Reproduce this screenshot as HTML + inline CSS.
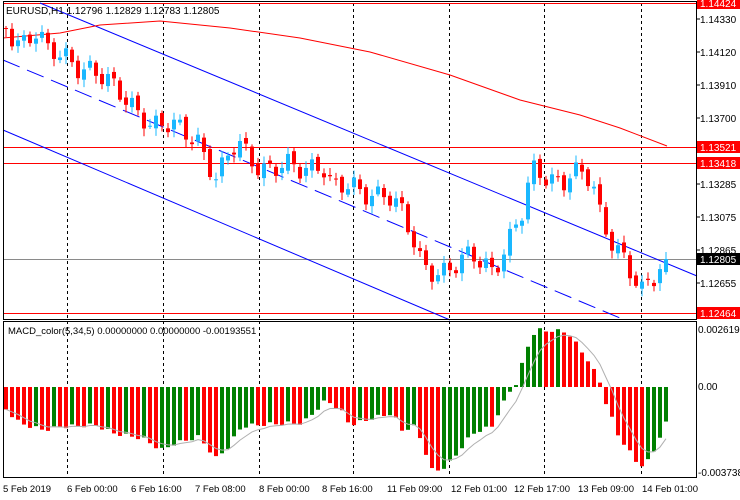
<!DOCTYPE html>
<html><head><meta charset="utf-8"><style>
body{margin:0;background:#fff;width:740px;height:500px;overflow:hidden}
svg{display:block;font-family:"Liberation Sans",sans-serif}
</style></head><body>
<svg id="s" width="740" height="500" xmlns="http://www.w3.org/2000/svg">
<rect x="0" y="0" width="740" height="500" fill="#fff"/>
<g id="grid" stroke="#000" stroke-dasharray="3,3" stroke-width="1"></g>
<g id="main"></g>
<g id="macd"></g>
<rect x="3.5" y="1.5" width="693" height="318" fill="none" stroke="#000"/>
<rect x="3.5" y="321.5" width="693" height="156" fill="none" stroke="#000"/>
<g font-size="10" fill="#000">
<text x="6" y="14">EURUSD,H1  1.12796 1.12829 1.12783 1.12805</text>
<text x="8" y="334" font-size="9.5">MACD_color(5,34,5) 0.00000000 0.00000000 -0.00193551</text>
<text x="700" y="23">1.14330</text><text x="700" y="56">1.14120</text><text x="700" y="89">1.13910</text>
<text x="700" y="122">1.13700</text><text x="700" y="188">1.13285</text><text x="700" y="221">1.13075</text>
<text x="700" y="254">1.12865</text><text x="700" y="287">1.12655</text>
<text x="698" y="333">0.0026195</text><text x="698" y="390">0.00</text><text x="698" y="476">-0.003738</text>
<g font-size="9.5"><text x="3" y="492">5 Feb 2019</text><text x="67" y="492">6 Feb 00:00</text><text x="131" y="492">6 Feb 16:00</text>
<text x="195" y="492">7 Feb 08:00</text><text x="259" y="492">8 Feb 00:00</text><text x="322" y="492">8 Feb 16:00</text>
<text x="387" y="492">11 Feb 09:00</text><text x="451" y="492">12 Feb 01:00</text><text x="514" y="492">12 Feb 17:00</text>
<text x="578" y="492">13 Feb 09:00</text><text x="642" y="492">14 Feb 01:00</text></g>
</g>
<g stroke="#000"><line x1="697" y1="19" x2="700" y2="19"/><line x1="697" y1="52" x2="700" y2="52"/><line x1="697" y1="85" x2="700" y2="85"/><line x1="697" y1="118" x2="700" y2="118"/><line x1="697" y1="184" x2="700" y2="184"/><line x1="697" y1="217" x2="700" y2="217"/><line x1="697" y1="250" x2="700" y2="250"/><line x1="697" y1="283" x2="700" y2="283"/></g>
<g font-size="10" fill="#fff">
<rect x="697" y="-2" width="43" height="11" fill="#f00"/><text x="700" y="7">1.14424</text>
<rect x="697" y="141" width="43" height="12" fill="#f00"/><text x="700" y="151">1.13521</text>
<rect x="697" y="157" width="43" height="12" fill="#f00"/><text x="700" y="167">1.13418</text>
<rect x="697" y="253" width="43" height="12" fill="#000"/><text x="700" y="263">1.12805</text>
<rect x="697" y="307" width="43" height="12" fill="#f00"/><text x="700" y="317">1.12464</text>
</g>
</svg>
<script>
(function(){
var NS="http://www.w3.org/2000/svg";
function el(p,t,a){var e=document.createElementNS(NS,t);for(var k in a)e.setAttribute(k,a[k]);p.appendChild(e);return e;}
var G=document.getElementById('grid'),M=document.getElementById('main'),D=document.getElementById('macd');
[67,163,259,353,449,544,641].forEach(function(x){el(G,'line',{x1:x+.5,y1:3,x2:x+.5,y2:477});});
[[3.5,'#f00'],[147.5,'#f00'],[163.5,'#f00'],[313.5,'#f00'],[259.5,'#8a8a8a']].forEach(function(h){el(M,'line',{x1:4,y1:h[0],x2:697,y2:h[0],stroke:h[1]});});
el(M,'line',{x1:40,y1:3,x2:697,y2:276,stroke:'#00f'});
el(M,'line',{x1:3,y1:130,x2:450,y2:320,stroke:'#00f'});
el(M,'line',{x1:3,y1:60,x2:620,y2:318,stroke:'#00f','stroke-dasharray':'18,8'});
el(M,'polyline',{points:'3,38 60,33 100,25 160,21 230,28 300,38 370,52 450,75 520,100 580,115 620,128 667,146',fill:'none',stroke:'#f00'});
function interp(P,x){for(var i=1;i<P.length;i++){if(x<=P[i][0]){var a=P[i-1],b=P[i],t=(x-a[0])/(b[0]-a[0]);return a[1]+t*(b[1]-a[1]);}}return P[P.length-1][1];}
var K=[[3,28],[20,40],[35,30],[45,55],[65,58],[90,68],[110,90],[140,110],[150,125],[195,135],[215,180],[235,145],[260,165],[300,172],[320,158],[330,185],[360,195],[385,188],[400,215],[420,268],[440,268],[470,260],[490,268],[500,250],[520,215],[530,175],[560,178],[570,170],[590,185],[600,225],[620,250],[640,295],[650,285],[665,259]];
var prev=interp(K,3);
for(var i=0;i<111;i++){var x=4+6*i;var c=interp(K,x)+10*Math.sin(i*1.7)+6*Math.sin(i*0.63);
 if(x>=662)c=259;
 var o=prev+3*Math.sin(i*3.1);var bt=Math.min(o,c),bb=Math.max(o,c);if(bb-bt<1)bb=bt+1;
 var col=c<o?'#1ab8ff':'#f00';
 var hi=bt-2-Math.abs(5*Math.sin(i*2.3)),lo=bb+2+Math.abs(6*Math.cos(i*1.9));
 el(M,'line',{x1:x+2,y1:hi,x2:x+2,y2:lo,stroke:col});
 el(M,'rect',{x:x,y:bt,width:4,height:bb-bt,fill:col});
 prev=c;}
var Z=[[0,283],[40,340],[90,360],[130,350],[200,345],[240,370],[300,385],[340,420],[370,400],[420,380],[455,445],[480,415],[510,350],[540,345],[600,340],[640,340],[690,270],[720,300],[740,345],[800,320],[830,310],[850,360],[880,350],[915,485],[945,470],[1000,370],[1040,350],[1080,240],[1090,230],[1120,95],[1135,60],[1200,65],[1240,140],[1270,215],[1280,270],[1310,380],[1355,470],[1375,450],[1410,340]].map(function(p){return[p[0]/2.12,p[1]/3+310];});
var ph=null,sig=null,spts=[];
for(var i=0;i<111;i++){var x=4+6*i;var y=interp(Z,x+1)+2*Math.sin(i*2.1);
 var h=387-y;var col=(ph===null||h<ph)?'#f00':'#008000';
 var t=Math.min(387,y),b=Math.max(387,y);
 el(D,'rect',{x:x,y:t,width:4,height:Math.max(1,b-t),fill:col});
 ph=h;sig=sig===null?y:sig+(y-sig)*0.33;spts.push((x+2)+','+sig.toFixed(1));}
el(D,'polyline',{points:spts.join(' '),fill:'none',stroke:'#b0b0b0'});
})();
</script>
</body></html>
